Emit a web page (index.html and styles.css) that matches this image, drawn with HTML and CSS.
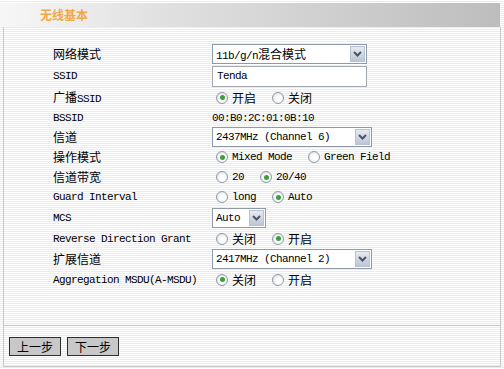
FILE: index.html
```html
<!DOCTYPE html>
<html>
	<head>
		<title>无线基本</title>
		<meta charset="utf-8">
		<link rel="stylesheet" href="styles.css">
	</head>
	<body>
		<div class="page">
			<div class="title-bar"><span class="title">无线基本</span></div>
			<div class="frame">
				<div class="content">
					<table class="form">
						<tr class="tall">
							<td class="label">网络模式</td>
							<td>
								<span class="dropdown w-wide">
									<span class="value"><span class="en">11b/g/n</span>混合模式</span>
									<span class="arrow"><svg width="9" height="6" viewBox="0 0 9 6"><path d="M1 1 L4.5 4.5 L8 1" fill="none" stroke="#4a5566" stroke-width="2"/></svg></span>
								</span>
							</td>
						</tr>
						<tr class="tall">
							<td class="label en">SSID</td>
							<td><span class="textbox en">Tenda</span></td>
						</tr>
						<tr class="mid">
							<td class="label">广播<span class="en">SSID</span></td>
							<td>
								<span class="radios">
									<span class="opt"><span class="radio on"></span>开启</span>
									<span class="opt"><span class="radio"></span>关闭</span>
								</span>
							</td>
						</tr>
						<tr class="short">
							<td class="label en">BSSID</td>
							<td class="en">00:B0:2C:01:0B:10</td>
						</tr>
						<tr>
							<td class="label">信道</td>
							<td>
								<span class="dropdown w-chan">
									<span class="value en">2437MHz (Channel 6)</span>
									<span class="arrow"><svg width="9" height="6" viewBox="0 0 9 6"><path d="M1 1 L4.5 4.5 L8 1" fill="none" stroke="#4a5566" stroke-width="2"/></svg></span>
								</span>
							</td>
						</tr>
						<tr>
							<td class="label">操作模式</td>
							<td>
								<span class="radios en">
									<span class="opt"><span class="radio on"></span>Mixed Mode</span>
									<span class="opt"><span class="radio"></span>Green Field</span>
								</span>
							</td>
						</tr>
						<tr>
							<td class="label">信道带宽</td>
							<td>
								<span class="radios en">
									<span class="opt"><span class="radio"></span>20</span>
									<span class="opt"><span class="radio on"></span>20/40</span>
								</span>
							</td>
						</tr>
						<tr>
							<td class="label en">Guard Interval</td>
							<td>
								<span class="radios en">
									<span class="opt"><span class="radio"></span>long</span>
									<span class="opt"><span class="radio on"></span>Auto</span>
								</span>
							</td>
						</tr>
						<tr class="mid">
							<td class="label en">MCS</td>
							<td>
								<span class="dropdown w-mcs">
									<span class="value en">Auto</span>
									<span class="arrow"><svg width="9" height="6" viewBox="0 0 9 6"><path d="M1 1 L4.5 4.5 L8 1" fill="none" stroke="#4a5566" stroke-width="2"/></svg></span>
								</span>
							</td>
						</tr>
						<tr class="mid">
							<td class="label en">Reverse Direction Grant</td>
							<td>
								<span class="radios">
									<span class="opt"><span class="radio"></span>关闭</span>
									<span class="opt"><span class="radio on"></span>开启</span>
								</span>
							</td>
						</tr>
						<tr>
							<td class="label">扩展信道</td>
							<td>
								<span class="dropdown w-chan">
									<span class="value en">2417MHz (Channel 2)</span>
									<span class="arrow"><svg width="9" height="6" viewBox="0 0 9 6"><path d="M1 1 L4.5 4.5 L8 1" fill="none" stroke="#4a5566" stroke-width="2"/></svg></span>
								</span>
							</td>
						</tr>
						<tr class="mid">
							<td class="label en">Aggregation MSDU(A-MSDU)</td>
							<td>
								<span class="radios">
									<span class="opt"><span class="radio on"></span>关闭</span>
									<span class="opt"><span class="radio"></span>开启</span>
								</span>
							</td>
						</tr>
					</table>
				</div>
				<div class="actions">
					<button type="button">上一步</button>
					<button type="button">下一步</button>
				</div>
			</div>
		</div>
	</body>
</html>
```

FILE: styles.css
```css
html{
	font-family: "Noto Sans CJK SC", sans-serif;
	font-size: 12px;
	line-height: 16px;
	color: #000;
}
body{
	margin: 0;
	background-color: #fff;
}
.page{
	width: 504px;
	height: 369px;
	padding-top: 3px;
	box-sizing: border-box;
	background: repeating-linear-gradient(to bottom, #fff 0 1px, #ececec 1px 2px);
}
.title-bar{
	width: 500px;
	height: 24px;
	line-height: 24px;
	background: linear-gradient(to right, #f7f7f7, #e2e2e2 30%, #bdbdbd);
}
.title{
	padding-left: 40px;
	color: #f0a848;
	font-weight: bold;
}
.frame{
	margin-left: 3px;
	width: 496px;
	border: 1px solid #c8c8c8;
	border-top: none;
}
.content{
	height: 299px;
	padding-top: 16px;
	box-sizing: border-box;
	border-bottom: 1px solid #c8c8c8;
}
.en{
	font-family: "Liberation Mono", monospace;
	font-size: 11px;
	letter-spacing: -0.6px;
}
.form{
	margin-left: 49px;
	border-collapse: collapse;
}
.form td{
	padding: 0;
	height: 20px;
	vertical-align: middle;
	white-space: nowrap;
}
.form tr.tall td{
	height: 22px;
}
.form tr.mid td{
	height: 21px;
}
.form tr.short td{
	height: 19px;
}
.form td.label{
	width: 159px;
}
.dropdown{
	display: flex;
	height: 20px;
	box-sizing: border-box;
	border: 1px solid #8f9aa8;
	background-color: #fff;
}
.w-wide{
	width: 155px;
}
.w-chan{
	width: 160px;
}
.w-mcs{
	width: 54px;
}
.dropdown .value{
	flex: 1;
	padding-left: 3px;
	line-height: 18px;
	overflow: hidden;
}
.arrow{
	width: 15px;
	margin: 1px;
	box-sizing: border-box;
	border: 1px solid #b8c2d0;
	background: linear-gradient(#e6eaf2, #bcc6d6);
	display: flex;
	align-items: center;
	justify-content: center;
}
.textbox{
	display: block;
	width: 155px;
	height: 21px;
	box-sizing: border-box;
	border: 1px solid #a3a9b0;
	background-color: #fff;
	padding-left: 4px;
	line-height: 19px;
}
.radios{
	display: flex;
	align-items: center;
}
.opt{
	display: inline-flex;
	align-items: center;
	gap: 4px;
	margin-left: 4px;
	margin-right: 12px;
}
.radio{
	width: 12px;
	height: 12px;
	box-sizing: border-box;
	border: 1px solid #8c9aaa;
	border-radius: 50%;
	background: radial-gradient(circle at 60% 60%, #fff 30%, #d8d8d8);
	display: flex;
	align-items: center;
	justify-content: center;
}
.radio.on::after{
	content: "";
	width: 5px;
	height: 5px;
	border-radius: 50%;
	background-color: #3c9f3c;
}
.actions{
	height: 40px;
	padding: 11px 0 0 5px;
	box-sizing: border-box;
	display: flex;
	align-items: flex-start;
	gap: 6px;
}
button{
	width: 52px;
	height: 19px;
	padding: 0;
	border: 1px solid #2e2e2e;
	background-color: #c8c8c8;
	font-family: "Noto Sans CJK SC", sans-serif;
	font-size: 12px;
	line-height: 15px;
	color: #000;
}
```
